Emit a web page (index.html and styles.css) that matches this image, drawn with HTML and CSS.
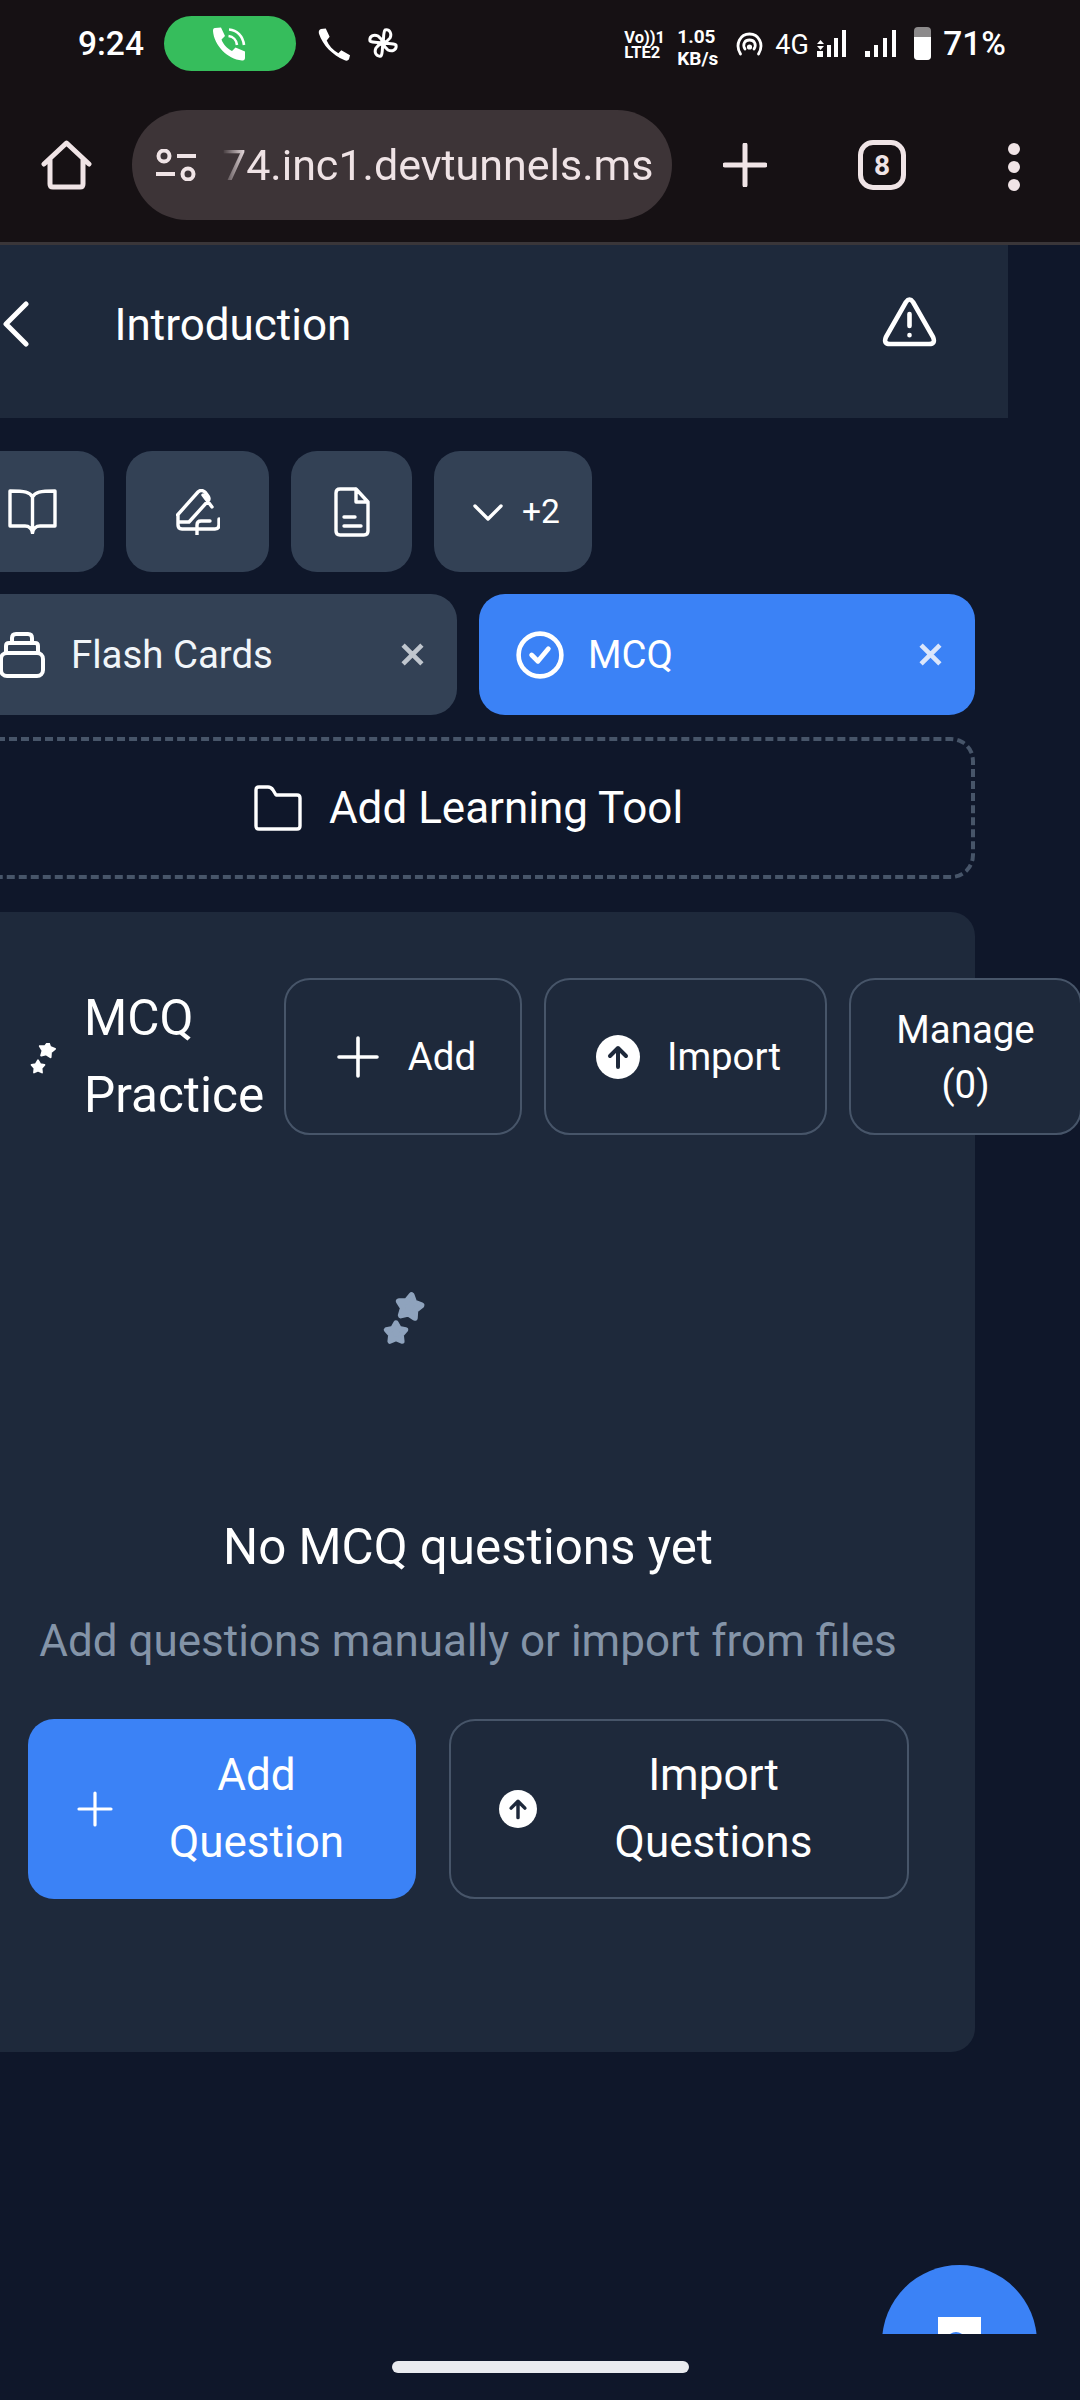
FILE: index.html
```html
<!DOCTYPE html>
<html lang="en">
<head>
<meta charset="utf-8">
<title>MCQ Practice</title>
<link rel="stylesheet" href="styles.css">
</head>
<body>
<div class="chrome">
  <div class="status">
    <span class="time">9:24</span>
    <span class="call-pill">
      <svg class="ic-call" viewBox="0 0 34 34"><path fill="#fff" d="M3 1 L9 0.5 L13 9 L9.5 12.5 C11 17 15 21.5 20 24 L23.5 20.5 L33 24.5 L33 31 C33 33 31.5 33.5 30 33.5 C15 32 2 18 1 4 C1 2 1.5 1 3 1Z"/><path fill="none" stroke="#fff" stroke-width="2.6" d="M17 2.5 C25 3 31 9 32 18 M16.5 9 C21 9.5 24.5 13 25 18"/></svg>
    </span>
    <svg class="ic-phone" viewBox="0 0 34 34"><path fill="#fff" d="M3 1 L8 0.5 L12 9 L9 13 C11 18 15 23 21 26 L24 23 L33 28 L32 32 C31 34 29 34 27 33 C15 28 5 18 1 6 C0.5 3 1 2 3 1Z"/></svg>
    <svg class="ic-fan" viewBox="0 0 30 30"><path fill="none" stroke="#fff" stroke-width="3" stroke-linejoin="round" d="M15 15 C11 14 5 15 2 13 C1 8 6 6 10 8 C13 10 14 12 15 15 C16 11 15 5 17 2 C22 1 24 6 22 10 C20 13 18 14 15 15 C19 16 25 15 28 17 C29 22 24 24 20 22 C17 20 16 18 15 15 C14 19 15 25 13 28 C8 29 6 24 8 20 C10 17 12 16 15 15Z"/></svg>
    <span class="status-gap"></span>
    <span class="net-lte"><span>Vo))1</span><span>LTE2</span></span>
    <span class="net-speed"><span>1.05</span><span>KB/s</span></span>
    <svg class="ic-hotspot" viewBox="0 0 28 24"><g fill="none" stroke="#fff" stroke-width="2.8" stroke-linecap="round"><path d="M5 22 C-1 12 5 2 14 2 C23 2 29 12 23 22"/><path d="M9.5 17 C6.5 12 9.5 8 14 8 C18.5 8 21.5 12 18.5 17"/></g><circle cx="14" cy="15" r="2.6" fill="#fff"/></svg>
    <span class="net-4g">4G</span>
    <svg class="ic-signal" viewBox="0 0 31 27"><path fill="#fff" d="M1 14 L4.5 10 L8 14Z M1 16 L8 16 L4.5 20Z M1 21 H7 V27 H1Z M11 15 H15 V27 H11Z M18 8 H22 V27 H18Z M26 0 H30 V27 H26Z"/></svg>
    <svg class="ic-signal second" viewBox="0 0 31 27"><path fill="#fff" d="M0 21 H5 V27 H0Z M9 15 H13 V27 H9Z M18 8 H22 V27 H18Z M27 0 H31 V27 H27Z"/></svg>
    <span class="battery"><span class="battery-fill"></span></span>
    <span class="pct">71%</span>
  </div>
  <div class="toolbar">
    <svg class="ic-home" viewBox="0 0 51 50"><path fill="none" stroke="#f0e4e6" stroke-width="5" stroke-linejoin="round" stroke-linecap="round" d="M3 24 L25.5 3 L48 24 M9 19 V44 Q9 47 12 47 H39 Q42 47 42 44 V19"/></svg>
    <div class="url-pill">
      <svg class="ic-tune" viewBox="0 0 40 32"><g fill="none" stroke="#f0e4e6" stroke-width="4"><circle cx="8" cy="7" r="5.5"/><circle cx="32" cy="25" r="5.5"/><path d="M21 7 H40 M0 25 H19"/></g></svg>
      <span class="url-text">74.inc1.devtunnels.ms</span>
    </div>
    <svg class="ic-plus" viewBox="0 0 44 44"><path stroke="#f0e4e6" stroke-width="5" stroke-linecap="round" d="M22 2 V42 M2 22 H42"/></svg>
    <span class="tabs-count">8</span>
    <span class="dots"><i></i><i></i><i></i></span>
  </div>
</div>

<div class="viewport">
  <main class="page">
    <header class="topbar">
      <svg class="ic-back" viewBox="0 0 26 46"><path fill="none" stroke="#fff" stroke-width="5" stroke-linecap="round" stroke-linejoin="round" d="M23 3 L3 23 L23 43"/></svg>
      <h1 class="lesson">Introduction</h1>
      <svg class="ic-warn" viewBox="0 0 55 50"><path fill="none" stroke="#fff" stroke-width="4.6" stroke-linejoin="round" d="M24 5 Q27.5 0 31 5 L51 40 Q54 47 47 47 H8 Q1 47 4 40Z"/><path stroke="#fff" stroke-width="4.6" stroke-linecap="round" d="M27.5 17 V29 M27.5 38 V38.2"/></svg>
    </header>

    <section class="content">
      <div class="tool-row">
        <button class="tool w-book"><svg class="ic-book" viewBox="0 0 49 45"><path fill="none" stroke="#fff" stroke-width="3.4" stroke-linejoin="round" d="M24.5 8 C22 3 17 2 2 2 V37 H17 C21 37 24 40 24.5 44 C25 40 28 37 32 37 H47 V2 C32 2 27 3 24.5 8 V44"/></svg></button>
        <button class="tool w-pen"><svg class="ic-pen" viewBox="0 0 44 46"><path fill="none" stroke="#fff" stroke-width="3.4" stroke-linejoin="round" stroke-linecap="round" d="M1.5 26 L22 3 Q25 0 29 3 L32 7 Q34 10 32 12 L13 33 H2 V26 M27 6 L36 18 M2 33 V36 Q2 40 6 40 H39 Q43 40 43 36 V30 M21 46 V36 Q21 32 25 32 H34"/></svg></button>
        <button class="tool w-file"><svg class="ic-file" viewBox="0 0 36 50"><path fill="none" stroke="#fff" stroke-width="3.4" stroke-linejoin="round" stroke-linecap="round" d="M22 2 H6 Q2 2 2 6 V44 Q2 48 6 48 H30 Q34 48 34 44 V15 L22 2 V15 H34 M10 30 H21 M10 39 H27"/></svg></button>
        <button class="tool w-more"><svg class="ic-chev" viewBox="0 0 30 17"><path fill="none" stroke="#fff" stroke-width="3.4" stroke-linecap="round" stroke-linejoin="round" d="M2 2 L15 15 L28 2"/></svg><span>+2</span></button>
      </div>

      <div class="tab-grid">
        <div class="tab">
          <svg class="ic-cards" viewBox="0 0 46 46"><g fill="none" stroke="#fff" stroke-width="4" stroke-linejoin="round"><rect x="2" y="21" width="42" height="23" rx="6"/><path d="M7 21 V14 Q7 11 10 11 H36 Q39 11 39 14 V21 M13 11 V6 Q13 2 17 2 H29 Q33 2 33 6 V11"/></g></svg>
          <span class="tab-label">Flash Cards</span>
          <svg class="ic-x muted" viewBox="0 0 22 22"><path stroke-width="4.4" d="M2 2 L20 20 M20 2 L2 20"/></svg>
        </div>
        <div class="tab active">
          <svg class="ic-check" viewBox="0 0 46 46"><circle cx="23" cy="23" r="20.5" fill="none" stroke="#fff" stroke-width="4.4"/><path fill="none" stroke="#fff" stroke-width="4.6" stroke-linecap="round" stroke-linejoin="round" d="M15 23 L21 29 L31 17"/></svg>
          <span class="tab-label">MCQ</span>
          <svg class="ic-x light" viewBox="0 0 22 22"><path stroke-width="4.4" d="M2 2 L20 20 M20 2 L2 20"/></svg>
        </div>
      </div>

      <div class="add-tool">
        <svg class="ic-folder" viewBox="0 0 48 46"><path fill="none" stroke="#fff" stroke-width="3.4" stroke-linejoin="round" d="M2 5 Q2 2 5 2 H14 Q17 2 19 5 L22 10 H43 Q46 10 46 13 V41 Q46 44 43 44 H5 Q2 44 2 41Z"/></svg>
        <span>Add Learning Tool</span>
      </div>

      <article class="card">
        <div class="card-head">
          <svg class="ic-stars-small" viewBox="0 0 27 33"><g fill="#fff" stroke="#fff" stroke-width="2.6" stroke-linejoin="round"><path transform="translate(17 7) rotate(10) scale(.8)" d="M0-10 3.2-4.4 9.5-3.1 5.2 1.700 5.900 8.100 0 5.500-5.900 8.100-5.200 1.700-9.500-3.100-3.200-4.400Z"/><path transform="translate(8 24) scale(.68)" d="M0-10 3.2-4.4 9.5-3.1 5.2 1.700 5.900 8.100 0 5.500-5.900 8.100-5.200 1.700-9.500-3.100-3.200-4.400Z"/></g></svg>
          <h2 class="card-title">MCQ Practice</h2>
          <button class="outline w-add"><svg class="ic-plus-small" viewBox="0 0 42 42"><path stroke="#fff" stroke-width="3.6" stroke-linecap="round" d="M21 2 V40 M2 21 H40"/></svg><span>Add</span></button>
          <button class="outline w-import"><svg class="ic-up head" viewBox="0 0 44 44"><circle cx="22" cy="22" r="22" fill="#fff"/><path fill="none" stroke="#1e293b" stroke-width="4" stroke-linecap="round" stroke-linejoin="round" d="M22 32 V14 M14 21 L22 13 L30 21"/></svg><span>Import</span></button>
          <button class="outline w-manage"><span>Manage (0)</span></button>
        </div>

        <div class="empty">
          <svg class="ic-stars-big" viewBox="0 0 128 128"><g fill="#8fa3bd" stroke="#8fa3bd" stroke-width="5" stroke-linejoin="round"><path transform="translate(5.500 51) rotate(10) scale(1.2)" d="M0-10 3.2-4.4 9.5-3.1 5.2 1.700 5.900 8.100 0 5.500-5.900 8.100-5.200 1.700-9.500-3.100-3.200-4.400Z"/><path transform="translate(-8 77) scale(1.02)" d="M0-10 3.2-4.4 9.5-3.1 5.2 1.700 5.900 8.100 0 5.500-5.900 8.100-5.200 1.700-9.500-3.100-3.200-4.400Z"/></g></svg>
          <h3 class="empty-title">No MCQ questions yet</h3>
          <p class="empty-sub">Add questions manually or import from files</p>
          <div class="empty-actions">
            <button class="cta primary"><svg class="ic-plus-cta" viewBox="0 0 36 36"><path stroke="#fff" stroke-width="3.2" stroke-linecap="round" d="M18 2 V34 M2 18 H34"/></svg><span class="cta-label">Add<br>Question</span></button>
            <button class="cta ghost"><svg class="ic-up cta-icon" viewBox="0 0 44 44"><circle cx="22" cy="22" r="22" fill="#fff"/><path fill="none" stroke="#1e293b" stroke-width="4" stroke-linecap="round" stroke-linejoin="round" d="M22 32 V14 M14 21 L22 13 L30 21"/></svg><span class="cta-label">Import<br>Questions</span></button>
          </div>
        </div>
      </article>
    </section>
  </main>
  <button class="fab"><svg class="ic-fab" viewBox="0 0 43 40"><path fill="#fff" d="M0 0 H43 V40 H24 V17 Q18 13 12 17 V40 H0Z"/></svg></button>
</div>

<div class="nav"><span class="home-bar"></span></div>
</body>
</html>
```
FILE: styles.css
```css
* { box-sizing: border-box; }
html, body { margin: 0; padding: 0; }
body {
  width: 1080px;
  height: 2400px;
  overflow: hidden;
  background: #0f172a;
  font-family: Roboto, "Liberation Sans", sans-serif;
  color: #fff;
}
button { font: inherit; color: inherit; background: none; border: 0; padding: 0; }
h1, h2, h3, p { margin: 0; font-weight: 400; }
svg { display: block; flex: none; }

/* browser chrome */
.chrome { height: 245px; background: #161114; border-bottom: 3px solid #3a3639; }
.status { height: 87px; padding: 16px 78px 0 78px; display: flex; align-items: flex-start; position: relative; }
.time { width: 86px; font-size: 33.500px; font-weight: 500; line-height: 55px; }
.call-pill { width: 132px; height: 55px; border-radius: 28px; background: #36bd5c; display: flex; align-items: center; justify-content: center; }
.ic-call { width: 34px; height: 34px; margin-left: -2px; }
.ic-phone { width: 33px; height: 33px; margin: 12px 0 0 22px; }
.ic-fan { width: 30px; height: 30px; margin: 12px 0 0 17px; }
.status-gap { flex: 1; }
.net-lte, .net-speed { display: flex; flex-direction: column; font-weight: 700; align-items: flex-start; }
.net-lte { font-size: 16.500px; line-height: 15px; margin-top: 14px; width: 37px; }
.net-speed { font-size: 19px; line-height: 22px; margin: 10px 0 0 16px; width: 40px; }
.ic-hotspot { width: 29px; height: 24px; margin: 16px 0 0 18px; }
.net-4g { font-size: 27px; line-height: 32px; margin: 13px 0 0 11px; width: 30px; }
.ic-signal { width: 31px; height: 27px; margin: 14px 0 0 11px; }
.ic-signal.second { margin-left: 18px; }
.battery { width: 17px; height: 33px; margin: 11px 0 0 18px; border-radius: 4px; background: #8c8a8b; display: flex; align-items: flex-end; overflow: hidden; }
.battery-fill { width: 100%; height: 23px; background: #fff; }
.pct { font-size: 33.500px; font-weight: 500; line-height: 55px; margin-left: 12px; margin-right: -4px; }

.toolbar { height: 155px; display: flex; align-items: flex-start; position: relative; }
.ic-home { width: 51px; height: 50px; margin: 53px 0 0 41px; }
.url-pill { width: 540px; height: 110px; margin: 23px 0 0 40px; border-radius: 55px; background: #3d3437; display: flex; align-items: center; padding-left: 24px; }
.ic-tune { width: 40px; height: 32px; }
.url-text { margin-left: 26px; font-size: 43px; line-height: 60px; color: #efe3e5; -webkit-mask-image: linear-gradient(90deg, transparent 0, #000 24px); mask-image: linear-gradient(90deg, transparent 0, #000 24px); }
.ic-plus { width: 44px; height: 44px; margin: 56px 0 0 51px; }
.tabs-count { width: 48px; height: 50px; margin: 53px 0 0 91px; border: 5px solid #f0e4e6; border-radius: 15px; color: #f0e4e6; font-size: 28px; font-weight: 700; display: flex; align-items: center; justify-content: center; }
.dots { margin: 56px 0 0 102px; display: flex; flex-direction: column; gap: 6px; width: 12px; }
.dots i { width: 12px; height: 12px; border-radius: 50%; background: #f0e4e6; }

/* page, scrolled sideways by 72px */
.viewport { height: 2089px; overflow: hidden; position: relative; }
.page { width: 1080px; margin-left: -72px; }
.topbar { height: 173px; background: #1e293b; display: flex; align-items: center; padding: 0 71px 0 75px; }
.ic-back { width: 26px; height: 46px; margin-top: -15px; }
.lesson { font-size: 44px; line-height: 58px; margin: -13px 0 0 85.500px; flex: 1; }
.ic-warn { width: 55px; height: 50px; margin-top: -19px; }

.content { padding: 33px 33px 0; }
.tool-row { display: flex; gap: 22px; }
.tool { height: 121px; border-radius: 26px; background: #334155; display: flex; align-items: center; justify-content: center; }
.w-book, .w-pen { width: 143px; }
.w-file { width: 121px; }
.w-more { width: 158px; gap: 19px; padding-left: 7px; font-size: 33.600px; }
.ic-book { width: 49px; height: 45px; }
.ic-pen { width: 44px; height: 46px; }
.ic-file { width: 36px; height: 50px; }
.ic-chev { width: 30px; height: 17px; margin-top: 2px; }

.tab-grid { display: grid; grid-template-columns: 1fr 1fr; gap: 22px; margin-top: 22px; }
.tab { height: 121px; border-radius: 26px; background: #334155; display: flex; align-items: center; padding: 0 33px 0 38px; font-size: 38.400px; }
.tab.active { background: #3b82f6; }
.ic-cards { width: 46px; height: 46px; }
.ic-check { width: 48px; height: 48px; margin-left: -1px; }
.tab-label { flex: 1; margin-left: 26px; color: #f1f5f9; }
.tab.active .tab-label { color: #fff; margin-left: 24px; }
.ic-x { width: 23px; height: 23px; }
.ic-x.muted { stroke: #c0c6ce; }
.ic-x.light { stroke: #dbe6fb; }

.add-tool { height: 142px; margin-top: 22px; border: 4px dashed #475569; border-radius: 24px; display: flex; align-items: center; justify-content: center; gap: 26px; font-size: 44px; }
.ic-folder { width: 50px; height: 46px; }

.card { margin-top: 33px; height: 1140px; border-radius: 24px; background: #1e293b; padding: 66px 0 0 66px; }
.card-head { display: flex; align-items: center; height: 157px; width: 1060px; }
.ic-stars-small { width: 27px; height: 33px; margin: 6px 0 0 3px; }
.card-title { width: 198px; margin-left: 27px; margin-right: 2px; font-size: 49.500px; line-height: 76.800px; }
.outline { height: 157px; border: 2px solid #475569; border-radius: 26px; background: #1e293b; display: flex; align-items: center; justify-content: center; font-size: 38.400px; line-height: 55px; flex: none; }
.w-add { width: 238px; gap: 29px; padding-left: 7px; margin-right: 22px; }
.w-import { width: 283px; gap: 27px; padding-left: 6px; margin-right: 22px; }
.w-manage { width: 233px; padding: 0 30px; }
.ic-plus-small { width: 42px; height: 42px; }
.ic-up.head { width: 44px; height: 44px; }

.empty { margin-left: -66px; display: flex; flex-direction: column; align-items: center; }
.ic-stars-big { width: 128px; height: 128px; margin-top: 121px; overflow: visible; }
.empty-title { margin-top: 130px; font-size: 49.300px; line-height: 67px; }
.empty-sub { margin-top: 27px; font-size: 44px; line-height: 67px; white-space: nowrap; color: #8494a8; }
.empty-actions { margin-top: 44px; display: flex; gap: 33px; }
.cta { height: 180px; border-radius: 26px; display: flex; align-items: center; font-size: 44px; line-height: 67px; }
.cta.primary { width: 388px; background: #3b82f6; padding: 0 15px 0 49px; }
.cta.ghost { width: 460px; border: 2px solid #475569; padding: 0 16px 0 48px; }
.ic-plus-cta { width: 36px; height: 36px; }
.ic-up.cta-icon { width: 38px; height: 38px; }
.cta-label { flex: 1; text-align: center; }

.fab { position: absolute; left: 882px; top: 2020px; width: 155px; height: 155px; border-radius: 50%; background: #3b82f6; display: flex; justify-content: center; padding-top: 52px; }
.ic-fab { width: 43px; height: 40px; }

.nav { height: 66px; padding-top: 27px; display: flex; justify-content: center; }
.home-bar { width: 297px; height: 12px; border-radius: 6px; background: #e9ebef; }
```
